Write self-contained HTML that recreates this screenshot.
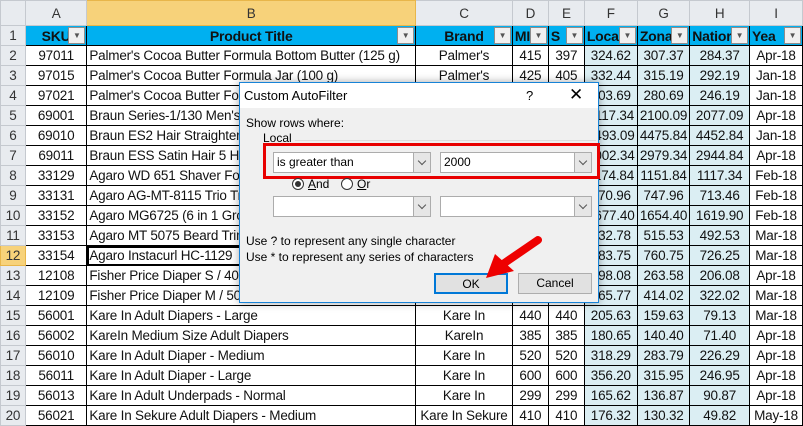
<!DOCTYPE html>
<html><head><meta charset="utf-8"><style>
*{margin:0;padding:0;box-sizing:border-box}
body{width:803px;height:425px;overflow:hidden;background:#fff;font-family:"Liberation Sans",sans-serif;position:relative}
table{border-collapse:collapse;table-layout:fixed;position:absolute;left:0;top:0}
td{height:20px;border:1px solid #000;font-size:13.5px;white-space:nowrap;overflow:hidden;text-align:center;padding:0 2px;color:#111;letter-spacing:-0.2px}
tr.ch td{height:25px;background:#e8ebef;border:1px solid #c5c9cf;color:#333;font-size:13.5px;font-weight:normal}
td.rh{background:#e8ebef;border:1px solid #c5c9cf;color:#333;text-align:center}
tr.ch td.sel,td.rh.sel{background:#f7d27a;border-color:#e8b64a}
td.l{text-align:left}
td.b{background:#dbeef3}
tr.h td{background:#00b0f0;font-weight:bold;position:relative;text-align:center;font-size:14px}
tr.h td.rh{background:#e8ebef;font-weight:normal;font-size:13.5px}
.fb{position:absolute;right:1px;top:1px;width:17px;height:17px;background:#f0f0f0;border:1px solid #8d8d8d;font-size:8px;line-height:15px;color:#555;text-align:center;font-weight:normal}
.cell12{outline:2px solid #000;outline-offset:-2px}
#dlg{position:absolute;left:239px;top:82px;width:360px;height:221px;background:#f0f0f0;border:1px solid #1883d7;box-shadow:0 0 8px rgba(0,0,0,.35);font-size:12px;color:#000}
#tb{height:25px;background:#fff;position:relative}
#tb span{position:absolute;left:4px;top:5px;font-size:13px}
.abs{position:absolute}
.cb{position:absolute;height:21px;background:#fff;border:1px solid #acacac;font-size:12px;line-height:19px;padding-left:3px}
.cb i{position:absolute;right:0;top:0;width:17px;height:19px;background:#e6e6e6;border-left:1px solid #acacac}
.cb i:after{content:"";position:absolute;left:5px;top:5px;width:5px;height:5px;border-right:1px solid #555;border-bottom:1px solid #555;transform:rotate(45deg)}
.btn{position:absolute;height:21px;background:#e1e1e1;border:1px solid #adadad;text-align:center;line-height:19px;font-size:12px}
.rad{position:absolute;width:12px;height:12px;border:1px solid #333;border-radius:50%;background:#fff}
</style></head><body>
<table>
<colgroup><col style="width:25px"><col style="width:62px"><col style="width:329px"><col style="width:97px"><col style="width:36px"><col style="width:36px"><col style="width:53px"><col style="width:52px"><col style="width:60px"><col style="width:53px"></colgroup>
<tr class="ch"><td></td><td>A</td><td class="sel">B</td><td>C</td><td>D</td><td>E</td><td>F</td><td>G</td><td>H</td><td>I</td></tr>
<tr class="h"><td class="rh">1</td><td>SKU<span class="fb">▼</span></td><td>Product Title<span class="fb">▼</span></td><td>Brand<span class="fb">▼</span></td><td style="text-align:left">MI<span class="fb">▼</span></td><td style="text-align:left">S<span class="fb">▼</span></td><td style="text-align:left">Loca<span class="fb">▼</span></td><td style="text-align:left">Zona<span class="fb">▼</span></td><td style="text-align:left">Natior<span class="fb">▼</span></td><td style="text-align:left">Yea<span class="fb">▼</span></td></tr>
<tr><td class="rh">2</td><td>97011</td><td class="l">Palmer's Cocoa Butter Formula Bottom Butter (125 g)</td><td>Palmer's</td><td>415</td><td>397</td><td class="b">324.62</td><td class="b">307.37</td><td class="b">284.37</td><td>Apr-18</td></tr>
<tr><td class="rh">3</td><td>97015</td><td class="l">Palmer's Cocoa Butter Formula Jar (100 g)</td><td>Palmer's</td><td>425</td><td>405</td><td class="b">332.44</td><td class="b">315.19</td><td class="b">292.19</td><td>Jan-18</td></tr>
<tr><td class="rh">4</td><td>97021</td><td class="l">Palmer's Cocoa Butter Formula Lotion</td><td>Palmer's</td><td>400</td><td>380</td><td class="b">303.69</td><td class="b">280.69</td><td class="b">246.19</td><td>Jan-18</td></tr>
<tr><td class="rh">5</td><td>69001</td><td class="l">Braun Series-1/130 Men's Shaver</td><td>Braun</td><td>2500</td><td>2300</td><td class="b">2117.34</td><td class="b">2100.09</td><td class="b">2077.09</td><td>Apr-18</td></tr>
<tr><td class="rh">6</td><td>69010</td><td class="l">Braun ES2 Hair Straightener</td><td>Braun</td><td>5000</td><td>4800</td><td class="b">4493.09</td><td class="b">4475.84</td><td class="b">4452.84</td><td>Jan-18</td></tr>
<tr><td class="rh">7</td><td>69011</td><td class="l">Braun ESS Satin Hair 5 Hair Dryer</td><td>Braun</td><td>3500</td><td>3200</td><td class="b">3002.34</td><td class="b">2979.34</td><td class="b">2944.84</td><td>Apr-18</td></tr>
<tr><td class="rh">8</td><td>33129</td><td class="l">Agaro WD 651 Shaver For Men</td><td>Agaro</td><td>1500</td><td>1300</td><td class="b">1174.84</td><td class="b">1151.84</td><td class="b">1117.34</td><td>Feb-18</td></tr>
<tr><td class="rh">9</td><td>33131</td><td class="l">Agaro AG-MT-8115 Trio Trimmer</td><td>Agaro</td><td>999</td><td>900</td><td class="b">770.96</td><td class="b">747.96</td><td class="b">713.46</td><td>Feb-18</td></tr>
<tr><td class="rh">10</td><td>33152</td><td class="l">Agaro MG6725 (6 in 1 Grooming Kit)</td><td>Agaro</td><td>1999</td><td>1800</td><td class="b">1677.40</td><td class="b">1654.40</td><td class="b">1619.90</td><td>Feb-18</td></tr>
<tr><td class="rh">11</td><td>33153</td><td class="l">Agaro MT 5075 Beard Trimmer</td><td>Agaro</td><td>699</td><td>650</td><td class="b">532.78</td><td class="b">515.53</td><td class="b">492.53</td><td>Mar-18</td></tr>
<tr><td class="rh sel">12</td><td>33154</td><td class="l cell12">Agaro Instacurl HC-1129</td><td>Agaro</td><td>999</td><td>900</td><td class="b">783.75</td><td class="b">760.75</td><td class="b">726.25</td><td>Mar-18</td></tr>
<tr><td class="rh">13</td><td>12108</td><td class="l">Fisher Price Diaper S / 40</td><td>Fisher Price</td><td>399</td><td>380</td><td class="b">298.08</td><td class="b">263.58</td><td class="b">206.08</td><td>Apr-18</td></tr>
<tr><td class="rh">14</td><td>12109</td><td class="l">Fisher Price Diaper M / 50</td><td>Fisher Price</td><td>599</td><td>550</td><td class="b">465.77</td><td class="b">414.02</td><td class="b">322.02</td><td>Mar-18</td></tr>
<tr><td class="rh">15</td><td>56001</td><td class="l">Kare In Adult Diapers - Large</td><td>Kare In</td><td>440</td><td>440</td><td class="b">205.63</td><td class="b">159.63</td><td class="b">79.13</td><td>Mar-18</td></tr>
<tr><td class="rh">16</td><td>56002</td><td class="l">KareIn Medium Size Adult Diapers</td><td>KareIn</td><td>385</td><td>385</td><td class="b">180.65</td><td class="b">140.40</td><td class="b">71.40</td><td>Apr-18</td></tr>
<tr><td class="rh">17</td><td>56010</td><td class="l">Kare In Adult Diaper - Medium</td><td>Kare In</td><td>520</td><td>520</td><td class="b">318.29</td><td class="b">283.79</td><td class="b">226.29</td><td>Apr-18</td></tr>
<tr><td class="rh">18</td><td>56011</td><td class="l">Kare In Adult Diaper - Large</td><td>Kare In</td><td>600</td><td>600</td><td class="b">356.20</td><td class="b">315.95</td><td class="b">246.95</td><td>Apr-18</td></tr>
<tr><td class="rh">19</td><td>56013</td><td class="l">Kare In Adult Underpads - Normal</td><td>Kare In</td><td>299</td><td>299</td><td class="b">165.62</td><td class="b">136.87</td><td class="b">90.87</td><td>Apr-18</td></tr>
<tr><td class="rh">20</td><td>56021</td><td class="l">Kare In Sekure Adult Diapers - Medium</td><td>Kare In Sekure</td><td>410</td><td>410</td><td class="b">176.32</td><td class="b">130.32</td><td class="b">49.82</td><td>May-18</td></tr>
</table>

<div id="dlg">
 <div id="tb"><span>Custom AutoFilter</span><span style="left:286px;top:5px">?</span><span style="left:329px;top:2px;font-size:17px">✕</span></div>
 <div class="abs" style="left:6px;top:33px">Show rows where:</div>
 <div class="abs" style="left:23px;top:48px">Local</div>
 <div class="abs" style="left:55px;top:57px;width:301px;height:1px;background:#dcdcdc"></div>
 <div class="abs" style="left:23px;top:60px;width:337px;height:36px;border:3px solid #e80000"></div>
 <div class="cb" style="left:33px;top:69px;width:158px">is greater than<i></i></div>
 <div class="cb" style="left:200px;top:69px;width:152px">2000<i></i></div>
 <div class="rad" style="left:52px;top:95px"><div style="position:absolute;left:2px;top:2px;width:6px;height:6px;border-radius:50%;background:#333"></div></div>
 <div class="abs" style="left:68px;top:94px;text-decoration:underline">A</div><div class="abs" style="left:76px;top:94px">nd</div>
 <div class="rad" style="left:101px;top:95px"></div>
 <div class="abs" style="left:117px;top:94px"><u>O</u>r</div>
 <div class="cb" style="left:33px;top:113px;width:158px"><i></i></div>
 <div class="cb" style="left:200px;top:113px;width:152px"><i></i></div>
 <div class="abs" style="left:6px;top:151px">Use ? to represent any single character</div>
 <div class="abs" style="left:6px;top:167px">Use * to represent any series of characters</div>
 <div class="btn" style="left:194px;top:190px;width:74px;border:2px solid #0078d7">OK</div>
 <div class="btn" style="left:278px;top:190px;width:74px">Cancel</div>
</div>
<svg class="abs" style="left:0;top:0" width="803" height="425">
 <line x1="538" y1="240" x2="503" y2="264" stroke="#e00" stroke-width="8" stroke-linecap="round"/>
 <path d="M486 278 L495 254 L514 271 Z" fill="#e00"/>
</svg>
</body></html>
